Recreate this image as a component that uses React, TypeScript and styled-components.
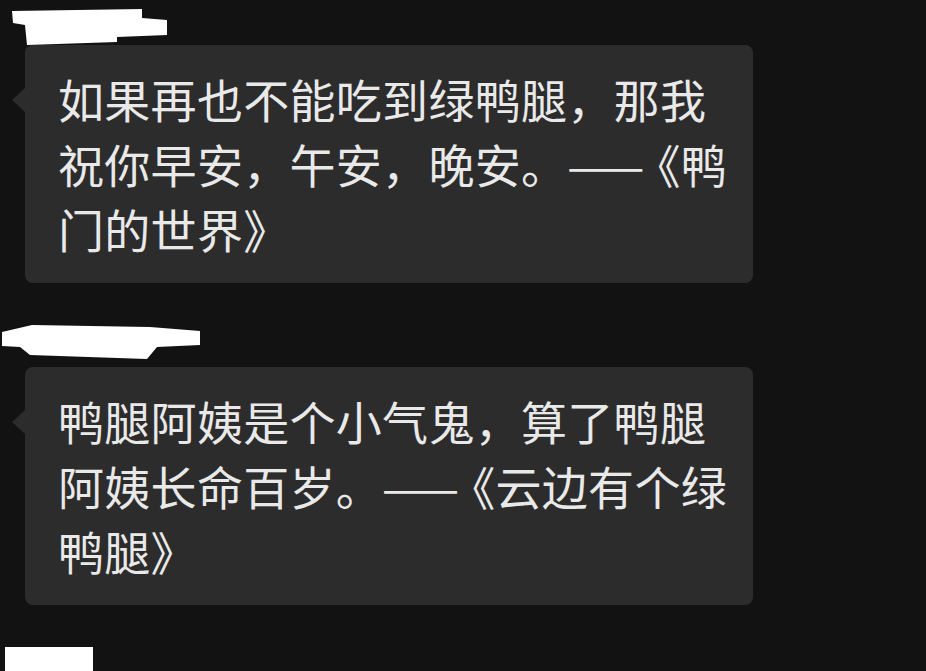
import styled, { createGlobalStyle } from 'styled-components';

const GlobalStyle = createGlobalStyle`
  html, body {
    margin: 0;
    padding: 0;
    background: #121212;
  }
  body {
    font-family: "Noto Sans CJK SC", "Noto Sans", sans-serif;
    overflow: hidden;
  }
`;

const Page = styled.div`
  width: 926px;
  height: 671px;
  background: #121212;
  display: flex;
  flex-direction: column;
  overflow: hidden;
`;

type NameProp = {
  $height: number;
};

const NameMark = styled.svg<NameProp>`
  display: block;
  width: 220px;
  height: ${(props) => props.$height}px;
  flex-shrink: 0;
`;

const Bubble = styled.div`
  position: relative;
  margin-left: 25px;
  width: 728px;
  height: 238px;
  box-sizing: border-box;
  padding: 21px 0 0 33px;
  background: #2c2c2c;
  border-radius: 8px;
  color: #e9e9e9;
  font-size: 46px;
  line-height: 65px;
  letter-spacing: 0.3px;

  &::before {
    content: '';
    position: absolute;
    left: -13px;
    top: 43px;
    border-top: 12px solid transparent;
    border-bottom: 12px solid transparent;
    border-right: 13px solid #2c2c2c;
  }
`;

const Line = styled.div`
  white-space: nowrap;
`;

// the source font sets the dash narrower
const Dash = styled.span`
  letter-spacing: -10px;
`;

type Message = {
  nameHeight: number;
  points: string;
  lines: string[];
};

const messages: Message[] = [
  {
    nameHeight: 45,
    points: '13,23 12,11 142,9 142,18 167,20 167,35 117,37 117,42 27,45 25,25',
    lines: ['如果再也不能吃到绿鸭腿，那我', '祝你早安，午安，晚安。——《鸭', '门的世界》'],
  },
  {
    nameHeight: 84,
    points: '2,49 32,42 150,44 200,48 200,62 157,64 147,76 30,72 20,64 2,63',
    lines: ['鸭腿阿姨是个小气鬼，算了鸭腿', '阿姨长命百岁。——《云边有个绿', '鸭腿》'],
  },
];

function renderLine(text: string) {
  const i = text.indexOf('——');
  if (i < 0) return text;
  return (
    <>
      {text.slice(0, i)}
      <Dash>——</Dash>
      {text.slice(i + 2)}
    </>
  );
}

function App() {
  return (
    <Page>
      <GlobalStyle />
      {messages.map((m) => (
        <div key={m.lines[0]}>
          <NameMark $height={m.nameHeight} viewBox={`0 0 220 ${m.nameHeight}`}>
            <polygon points={m.points} fill="#ffffff" />
          </NameMark>
          <Bubble>
            {m.lines.map((l) => (
              <Line key={l}>{renderLine(l)}</Line>
            ))}
          </Bubble>
        </div>
      ))}
      <NameMark $height={66} viewBox="0 0 220 66">
        <polygon points="5,42 93,42 93,66 5,66" fill="#ffffff" />
      </NameMark>
    </Page>
  );
}

export default App;
